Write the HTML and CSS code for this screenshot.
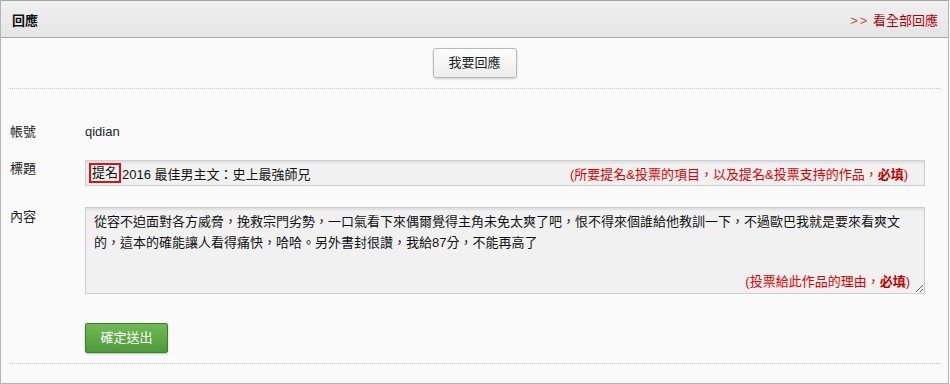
FILE: index.html
```html
<!DOCTYPE html>
<html lang="zh-Hant">
<head>
	<meta charset="UTF-8">
	<title>回應</title>
	<link rel="stylesheet" href="styles.css">
</head>
<body>
	<div class="reply">
		<div class="reply-head">
			<h3>回應</h3>
			<a class="more" href="#"><span class="arr">&gt;&gt;</span> 看全部回應</a>
		</div>
		<div class="reply-btn">
			<a class="btn-gray" href="#">我要回應</a>
		</div>
		<div class="dots"></div>
		<div class="form">
			<div class="row row-acc">
				<span class="label">帳號</span>
				<span class="val">qidian</span>
			</div>
			<div class="row row-title">
				<span class="label">標題</span>
				<div class="field">
					<span class="tag">提名</span>
					<span class="txt">2016 最佳男主文：史上最強師兄</span>
					<span class="hint">(所要提名&amp;投票的項目，以及提名&amp;投票支持的作品，<b>必填</b>)</span>
				</div>
			</div>
			<div class="row row-body">
				<span class="label">內容</span>
				<div class="area">
					<textarea>從容不迫面對各方威脅，挽救宗門劣勢，一口氣看下來偶爾覺得主角未免太爽了吧，恨不得來個誰給他教訓一下，不過歐巴我就是要來看爽文的，這本的確能讓人看得痛快，哈哈。另外書封很讚，我給87分，不能再高了</textarea>
					<span class="hint hint-area">(投票給此作品的理由，<b>必填</b>)</span>
				</div>
			</div>
			<div class="row row-send">
				<span class="label"></span>
				<a class="btn-green" href="#">確定送出</a>
			</div>
		</div>
		<div class="dots dots-end"></div>
	</div>
</body>
</html>
```

FILE: styles.css
```css
*{ margin:0; padding:0; box-sizing:border-box; }
a{ text-decoration:none; }
body{ background:#fff; font-family:"Liberation Sans", "Noto Sans CJK TC", sans-serif; font-size:13px; color:#222; }

.reply{ width:949px; height:384px; border:1px solid #b4b4b4; border-top-color:#a6a6a6; background:#fafafa; }
.reply-head{ height:37px; display:flex; align-items:center; justify-content:space-between; padding:0 10px 0 11px; background:linear-gradient(#f0f0f0, #e5e5e5); border-bottom:1px solid #a8a8a8; }
.reply-head h3{ font-size:13px; font-weight:bold; color:#111; }
.reply-head .more{ color:#b0000b; font-size:13px; }
.reply-head .more .arr{ color:#d04848; letter-spacing:2px; }

.reply-btn{ display:flex; justify-content:center; padding-top:10px; }
.btn-gray{ display:block; width:84px; height:30px; line-height:28px; text-align:center; color:#222; border:1px solid #b8b8b8; border-radius:3px; background:linear-gradient(#fdfdfd, #ededed); box-shadow:0 1px 2px rgba(0,0,0,0.18); }

.dots{ height:1px; margin:10px 7px 0 9px; border-top:1px dotted #c8c8c8; }
.dots-end{ margin-top:10px; }

.form{ padding:34px 23px 0 9px; }
.row{ display:flex; align-items:flex-start; }
.label{ width:75px; flex:none; line-height:18px; color:#222; }
.val{ line-height:18px; color:#222; }
.row-title{ margin-top:19px; }
.row-title .label{ line-height:17px; }
.row-body{ margin-top:21px; }
.row-body .label{ padding-top:1px; }
.row-send{ margin-top:30px; }

.field{ flex:1; height:26px; display:flex; align-items:center; padding:0 16px 0 3px; background:#f1f1f1; border:1px solid #cfcfcf; box-shadow:inset 0 2px 2px rgba(0,0,0,0.07); }
.field .tag{ border:2px solid #e01010; padding:0 1px; line-height:16px; color:#111; }
.field .txt{ color:#111; padding-left:1px; }
.hint{ color:#e00000; }
.hint b{ color:#c00000; }
.field .hint{ margin-left:auto; }

.area{ flex:1; position:relative; }
.area textarea{ display:block; width:100%; height:87px; resize:both; padding:3px 19px 0 8px; font-family:"Liberation Sans", "Noto Sans CJK TC", sans-serif; font-size:13px; line-height:21px; color:#111; background:#f1f1f1; border:1px solid #cfcfcf; box-shadow:inset 0 2px 2px rgba(0,0,0,0.07); outline:none; overflow:hidden; }
.hint-area{ position:absolute; right:15px; bottom:3px; line-height:18px; }

.btn-green{ display:block; width:83px; height:30px; line-height:28px; text-align:center; color:#fff; border:1px solid #3f7d2e; border-radius:2px; background:linear-gradient(#72b956, #4d9a3a); box-shadow:0 1px 2px rgba(0,0,0,0.25); }
.row-send{ margin-top:29px; }
```
